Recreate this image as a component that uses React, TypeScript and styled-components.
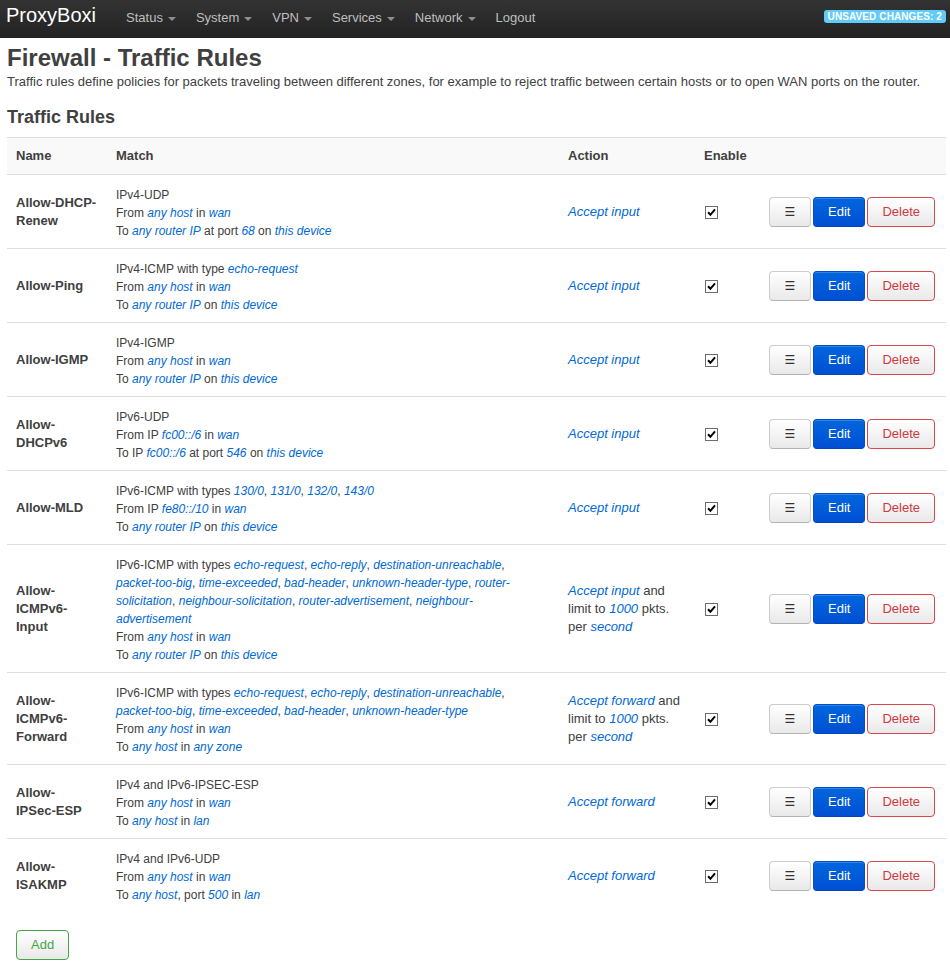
import React from "react";
import styled, { createGlobalStyle } from "styled-components";

const GlobalStyle = createGlobalStyle`
  html, body { margin: 0; padding: 0; background: #fff; }
  body {
    font-family: "Liberation Sans", Arial, Helvetica, sans-serif;
    font-size: 13px;
    line-height: 18px;
    color: #404040;
  }
  * { box-sizing: border-box; }
`;

const Navbar = styled.header`
  display: flex;
  align-items: flex-start;
  height: 38px;
  padding: 0 4px 0 6px;
  background: linear-gradient(to bottom, #333333, #222222);
`;

const Brand = styled.a`
  font-size: 20px;
  line-height: 22px;
  padding: 4px 20px 12px 0;
  color: #ffffff;
  text-decoration: none;
`;

const NavList = styled.nav`
  display: flex;
  flex: 1;
`;

const NavItem = styled.a`
  display: flex;
  align-items: center;
  padding: 8px 10px 11px;
  font-size: 13px;
  line-height: 19px;
  color: #bfbfbf;
  text-decoration: none;
`;

const Caret = styled.span`
  display: inline-block;
  width: 0;
  height: 0;
  margin: 2px 0 0 5px;
  border-top: 4px solid #8f8f8f;
  border-left: 4px solid transparent;
  border-right: 4px solid transparent;
`;

const Badge = styled.span`
  margin-top: 10px;
  padding: 0 4px;
  height: 13px;
  font-size: 10px;
  line-height: 13px;
  font-weight: bold;
  letter-spacing: 0.1px;
  color: #ffffff;
  background: #62cbf8;
  border-radius: 3px;
  white-space: nowrap;
`;

const Main = styled.main`
  padding: 0 4px 0 7px;
`;

const Title = styled.h1`
  margin: 5px 0 0;
  font-size: 24px;
  line-height: 30px;
  font-weight: bold;
  color: #404040;
`;

const Desc = styled.p`
  margin: 0 0 13px;
  font-size: 13px;
  line-height: 18px;
`;

const SectionTitle = styled.h3`
  margin: 0 0 6px;
  font-size: 18px;
  line-height: 27px;
  font-weight: bold;
  color: #404040;
`;

const Table = styled.table`
  width: 939px;
  table-layout: fixed;
  border-collapse: collapse;
  border-spacing: 0;
`;

const Th = styled.th<{ $w: number }>`
  width: ${(p) => p.$w}px;
  height: 37px;
  padding: 0 9px;
  text-align: left;
  font-size: 13px;
  line-height: 18px;
  font-weight: bold;
  background: #f9f9f9;
  border-top: 1px solid #dddddd;
  border-bottom: 1px solid #dddddd;
  vertical-align: middle;
`;

const Td = styled.td`
  padding: 10px 9px 9px;
  font-size: 13px;
  line-height: 18px;
  vertical-align: middle;
`;

const MatchCell = styled(Td)`
  padding: 11px 24px 8px 9px;
  font-size: 12px;
  vertical-align: top;
`;

const NameCell = styled(Td)`
  font-weight: bold;
`;

const NoWrap = styled.span`
  white-space: nowrap;
`;

const Row = styled.tr`
  & + & > td {
    border-top: 1px solid #dddddd;
  }
`;

const Line = styled.div``;

const Link = styled.em`
  color: #0069d6;
  font-style: italic;
`;

const Buttons = styled.div`
  display: flex;
  gap: 2px;
  white-space: nowrap;
`;

const Btn = styled.button<{ $kind?: "default" | "edit" | "delete" | "add" }>`
  height: 30px;
  padding: 5px 14px;
  font-family: "Liberation Sans", Arial, sans-serif;
  font-size: 13px;
  line-height: 18px;
  border-radius: 4px;
  cursor: pointer;
  border: 1px solid
    ${(p) =>
      p.$kind === "edit"
        ? "#004ec8"
        : p.$kind === "delete"
        ? "#d9464b"
        : p.$kind === "add"
        ? "#46a546"
        : "#cccccc"};
  border-bottom-color: ${(p) =>
    p.$kind === "edit"
      ? "#0047b8"
      : p.$kind === "delete"
      ? "#d9464b"
      : p.$kind === "add"
      ? "#46a546"
      : "#b3b3b3"};
  color: ${(p) =>
    p.$kind === "edit"
      ? "#ffffff"
      : p.$kind === "delete"
      ? "#d0393f"
      : p.$kind === "add"
      ? "#46a546"
      : "#333333"};
  background: ${(p) =>
    p.$kind === "edit"
      ? "linear-gradient(to bottom, #0066de, #004fd2)"
      : "linear-gradient(to bottom, #ffffff, #e9e9e9)"};
  box-shadow: inset 0 1px 0 rgba(255, 255, 255, 0.2);
`;

const MenuGlyph = styled.span`
  display: inline-block;
  width: 12px;
  font-family: "DejaVu Sans", sans-serif;
  font-size: 12px;
`;

const AddBtn = styled(Btn)`
  margin: 18px 0 0 9px;
`;

const CheckBox = styled.span`
  display: block;
  width: 13px;
  height: 13px;
  margin-left: 1px;
`;

const Check = () => (
  <CheckBox>
    <svg width="13" height="13" viewBox="0 0 13 13" style={{ display: "block" }}>
      <rect x="0.5" y="0.5" width="12" height="12" fill="#fff" stroke="#6d6d6d" />
      <path d="M3 6.3 L5.4 8.8 L10 3.4" fill="none" stroke="#000" strokeWidth="2" />
    </svg>
  </CheckBox>
);

const parse = (s: string) =>
  s.split(/(\{[^}]+\})/).map((p, i) =>
    p.startsWith("{") ? <Link key={i}>{p.slice(1, -1)}</Link> : <React.Fragment key={i}>{p}</React.Fragment>
  );

const parseName = (s: string) =>
  s.split(/(\{[^}]+\})/).map((p, i) =>
    p.startsWith("{") ? <NoWrap key={i}>{p.slice(1, -1)}</NoWrap> : <React.Fragment key={i}>{p}</React.Fragment>
  );

type Rule = { name: string; match: string[]; action: string };

const icmpAll =
  "IPv6-ICMP with types {echo-request}, {echo-reply}, {destination-unreachable}, {packet-too-big}, {time-exceeded}, {bad-header}, {unknown-header-type}, {router-solicitation}, {neighbour-solicitation}, {router-advertisement}, {neighbour-advertisement}";
const icmpFwd =
  "IPv6-ICMP with types {echo-request}, {echo-reply}, {destination-unreachable}, {packet-too-big}, {time-exceeded}, {bad-header}, {unknown-header-type}";

const rules: Rule[] = [
  {
    name: "Allow-DHCP-Renew",
    match: ["IPv4-UDP", "From {any host} in {wan}", "To {any router IP} at port {68} on {this device}"],
    action: "{Accept input}",
  },
  {
    name: "Allow-Ping",
    match: ["IPv4-ICMP with type {echo-request}", "From {any host} in {wan}", "To {any router IP} on {this device}"],
    action: "{Accept input}",
  },
  {
    name: "Allow-IGMP",
    match: ["IPv4-IGMP", "From {any host} in {wan}", "To {any router IP} on {this device}"],
    action: "{Accept input}",
  },
  {
    name: "Allow-DHCPv6",
    match: ["IPv6-UDP", "From IP {fc00::/6} in {wan}", "To IP {fc00::/6} at port {546} on {this device}"],
    action: "{Accept input}",
  },
  {
    name: "Allow-MLD",
    match: [
      "IPv6-ICMP with types {130/0}, {131/0}, {132/0}, {143/0}",
      "From IP {fe80::/10} in {wan}",
      "To {any router IP} on {this device}",
    ],
    action: "{Accept input}",
  },
  {
    name: "Allow-ICMPv6-Input",
    match: [icmpAll, "From {any host} in {wan}", "To {any router IP} on {this device}"],
    action: "{Accept input} and limit to {1000} pkts. per {second}",
  },
  {
    name: "Allow-ICMPv6-Forward",
    match: [icmpFwd, "From {any host} in {wan}", "To {any host} in {any zone}"],
    action: "{Accept forward} and limit to {1000} pkts. per {second}",
  },
  {
    name: "Allow-{IPSec-ESP}",
    match: ["IPv4 and IPv6-IPSEC-ESP", "From {any host} in {wan}", "To {any host} in {lan}"],
    action: "{Accept forward}",
  },
  {
    name: "Allow-ISAKMP",
    match: ["IPv4 and IPv6-UDP", "From {any host} in {wan}", "To {any host}, port {500} in {lan}"],
    action: "{Accept forward}",
  },
];

const navItems = [
  { label: "Status", caret: true },
  { label: "System", caret: true },
  { label: "VPN", caret: true },
  { label: "Services", caret: true },
  { label: "Network", caret: true },
  { label: "Logout", caret: false },
];

export default function App() {
  return (
    <>
      <GlobalStyle />
      <Navbar>
        <Brand href="#">ProxyBoxi</Brand>
        <NavList>
          {navItems.map((n) => (
            <NavItem key={n.label} href="#">
              {n.label}
              {n.caret && <Caret />}
            </NavItem>
          ))}
        </NavList>
        <Badge>UNSAVED CHANGES: 2</Badge>
      </Navbar>
      <Main>
        <Title>Firewall - Traffic Rules</Title>
        <Desc>
          Traffic rules define policies for packets traveling between different zones, for example to reject traffic
          between certain hosts or to open WAN ports on the router.
        </Desc>
        <SectionTitle>Traffic Rules</SectionTitle>
        <Table>
          <thead>
            <tr>
              <Th $w={100}>Name</Th>
              <Th $w={452}>Match</Th>
              <Th $w={136}>Action</Th>
              <Th $w={65}>Enable</Th>
              <Th $w={186}></Th>
            </tr>
          </thead>
          <tbody>
            {rules.map((r) => (
              <Row key={r.name}>
                <NameCell>{parseName(r.name)}</NameCell>
                <MatchCell>
                  {r.match.map((m, i) => (
                    <Line key={i}>{parse(m)}</Line>
                  ))}
                </MatchCell>
                <Td>{parse(r.action)}</Td>
                <Td>
                  <Check />
                </Td>
                <Td>
                  <Buttons>
                    <Btn>
                      <MenuGlyph>☰</MenuGlyph>
                    </Btn>
                    <Btn $kind="edit">Edit</Btn>
                    <Btn $kind="delete">Delete</Btn>
                  </Buttons>
                </Td>
              </Row>
            ))}
          </tbody>
        </Table>
        <AddBtn $kind="add">Add</AddBtn>
      </Main>
    </>
  );
}
